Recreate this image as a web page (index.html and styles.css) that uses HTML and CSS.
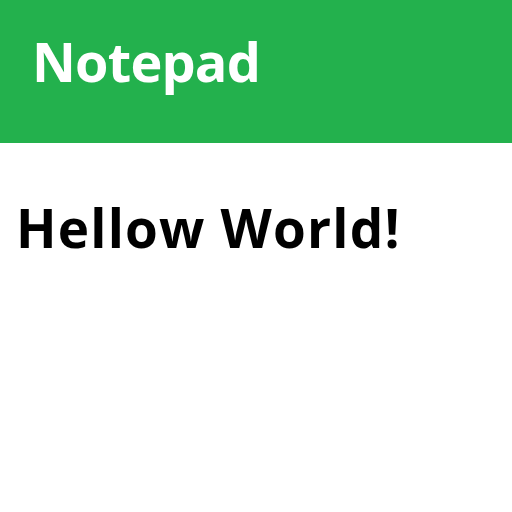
FILE: index.html
```html
<!DOCTYPE html>
<html>
<head>
<meta charset="utf-8">
<link rel="stylesheet" href="styles.css">
</head>
<body>
<header class="bar">
  <h1 class="bar-title">Notepad</h1>
</header>
<main class="content">
  <h2 class="note">Hellow World!</h2>
</main>
</body>
</html>
```

FILE: styles.css
```css
html, body {
  margin: 0;
  padding: 0;
  background: #ffffff;
  font-family: "Open Sans", "Liberation Sans", sans-serif;
}
.bar {
  background: #23b14d;
  height: 143px;
  box-sizing: border-box;
  padding: 25px 0 0 32px;
}
.bar-title {
  margin: 0;
  color: #ffffff;
  font-weight: 700;
  font-size: 54px;
  line-height: 72px;
  letter-spacing: -0.8px;
}
.content {
  padding: 50px 0 0 16px;
}
.note {
  margin: 0;
  color: #000000;
  font-weight: 700;
  font-size: 53px;
  line-height: 70px;
  letter-spacing: 1.2px;
}
```
